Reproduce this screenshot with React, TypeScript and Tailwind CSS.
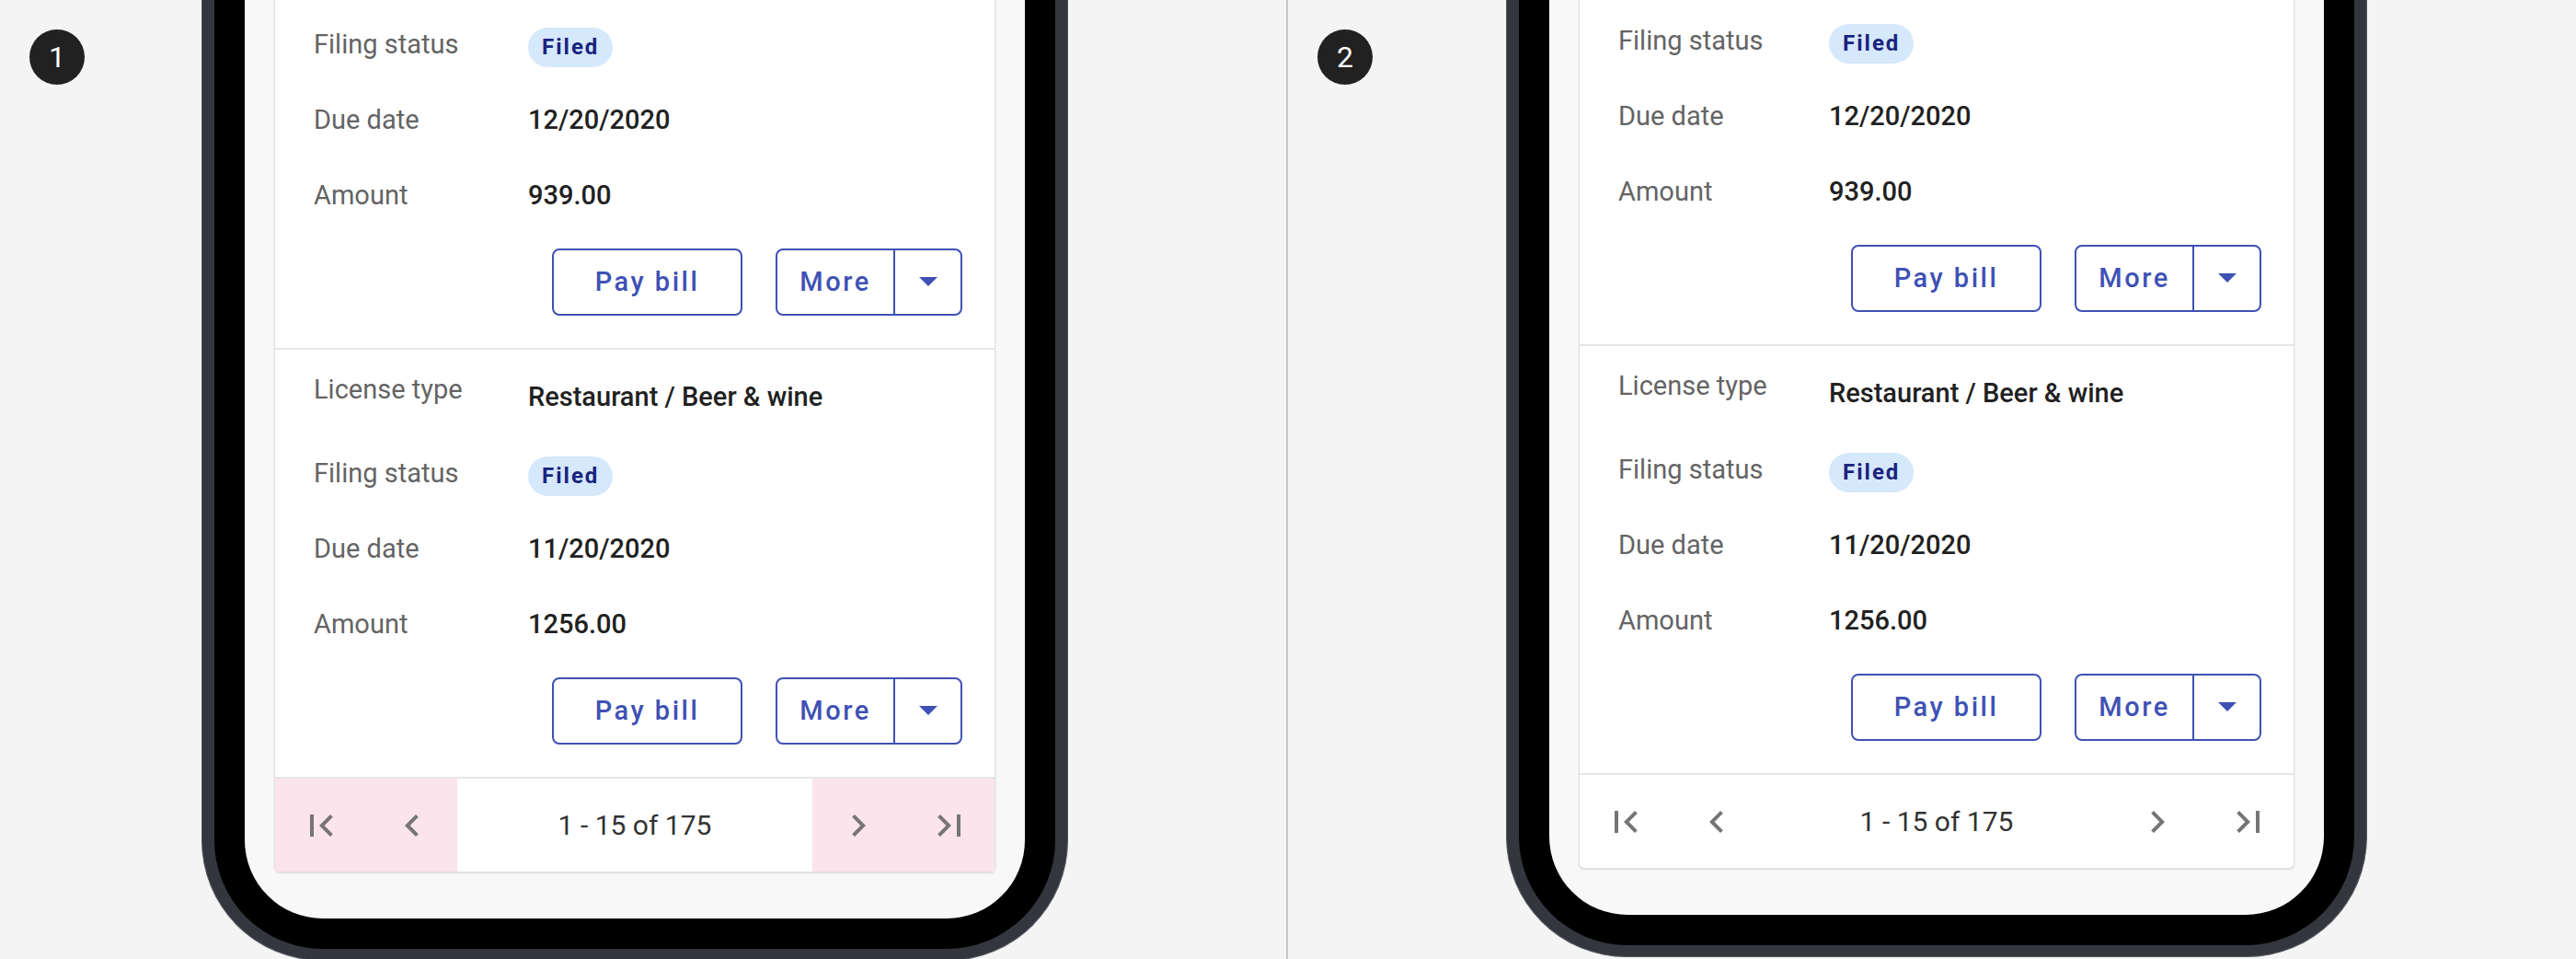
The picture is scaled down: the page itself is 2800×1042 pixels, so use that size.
import { MdFirstPage, MdChevronLeft, MdChevronRight, MdLastPage, MdArrowDropDown } from 'react-icons/md'

interface Bill {
  license: string
  status: string
  due: string
  amount: string
  hideLicense?: boolean
}

// first entry is scrolled partly off the top of the screen
const BILLS: Bill[] = [
  { license: 'Restaurant / Beer & wine', status: 'Filed', due: '12/20/2020', amount: '939.00', hideLicense: true },
  { license: 'Restaurant / Beer & wine', status: 'Filed', due: '11/20/2020', amount: '1256.00' },
]

function Label({ children }: { children: React.ReactNode }) {
  return <span className="text-[29px] leading-[34px] text-[#646464]">{children}</span>
}

function BillEntry({ bill, labelW }: { bill: Bill; labelW: string }) {
  return (
    <div className="flex flex-col border-t-2 border-[#e6e6e6] pl-[42px] pr-[35px] pb-[35px]">
      {/* License type */}
      {bill.hideLicense ? (
        <div className="h-[93px]" />
      ) : (
        <div className="flex items-start h-[93px] pt-[26px]">
          <div className={labelW}>
            <Label>License type</Label>
          </div>
          <span className="mt-[8px] text-[29px] leading-[34px] font-medium text-[#212121]">{bill.license}</span>
        </div>
      )}

      {/* Filing status */}
      <div className="flex items-center h-[82px]">
        <div className={labelW}>
          <Label>Filing status</Label>
        </div>
        <span className="mt-[6px] inline-flex items-center h-[43px] px-[15px] rounded-full bg-[#d5e8fc] text-[24px] font-bold tracking-[2px] text-[#1a237e]">
          {bill.status}
        </span>
      </div>

      {/* Due date */}
      <div className="flex items-center h-[82px]">
        <div className={labelW}>
          <Label>Due date</Label>
        </div>
        <span className="text-[29px] leading-[34px] font-medium text-[#212121]">{bill.due}</span>
      </div>

      {/* Amount */}
      <div className="flex items-center h-[82px]">
        <div className={labelW}>
          <Label>Amount</Label>
        </div>
        <span className="text-[29px] leading-[34px] font-medium text-[#212121]">{bill.amount}</span>
      </div>

      {/* Actions */}
      <div className="flex justify-end gap-[36px] mt-[17px]">
        <button className="w-[207px] h-[73px] rounded-[8px] border-2 border-[#3f51b5] text-[29px] font-medium tracking-[2.5px] text-[#3f51b5]">
          Pay bill
        </button>
        <div className="flex h-[73px] rounded-[8px] border-2 border-[#3f51b5]">
          <button className="w-[126px] text-[29px] font-medium tracking-[2.5px] text-[#3f51b5]">More</button>
          <button className="w-[73px] border-l-2 border-[#3f51b5] flex items-center justify-center text-[#3f51b5]">
            <MdArrowDropDown size={48} className="-mt-[4px]" />
          </button>
        </div>
      </div>
    </div>
  )
}

function Pagination({ highlight }: { highlight: boolean }) {
  const cell = `w-[99px] flex items-center justify-center text-[#757575] ${highlight ? 'bg-[#fce4ec]' : ''}`
  return (
    <div className="flex h-[103px] border-t-2 border-[#e6e6e6]">
      <div className={cell}>
        <MdFirstPage size={48} />
      </div>
      <div className={cell}>
        <MdChevronLeft size={48} />
      </div>
      <div className="flex-1 flex items-center justify-center text-[30px] text-[#333333]">1 - 15 of 175</div>
      <div className={cell}>
        <MdChevronRight size={48} />
      </div>
      <div className={cell}>
        <MdLastPage size={48} />
      </div>
    </div>
  )
}

function Phone({ screenW, labelW, highlight }: { screenW: string; labelW: string; highlight: boolean }) {
  return (
    <div className="shrink-0 rounded-b-[131px] bg-[#34363e] border-x border-b border-[#55575e] px-[13px] pb-[12px]">
      <div className="rounded-b-[118px] bg-black px-[33px] pb-[33px]">
        <div className={`${screenW} rounded-b-[85px] bg-[#f8f8f8] px-[32px] pb-[50px]`}>
          <div className="flex flex-col bg-white border-x border-b border-[#e0e0e0] rounded-b-[6px] shadow-[0_1px_2px_rgba(0,0,0,0.12)]">
            {BILLS.map((b, i) => (
              <BillEntry key={i} bill={b} labelW={labelW} />
            ))}
            <Pagination highlight={highlight} />
          </div>
        </div>
      </div>
    </div>
  )
}

function StepBadge({ n }: { n: number }) {
  return (
    <div className="self-start shrink-0 mt-[32px] ml-[32px] size-[60px] rounded-full bg-[#212121] flex items-center justify-center text-[32px] font-normal text-white">
      {n}
    </div>
  )
}

export default function App() {
  return (
    <div className="flex w-[2800px] h-[1042px] overflow-hidden bg-[#f4f4f4] font-['Roboto',sans-serif]">
      {/* Variant 1: touch targets highlighted */}
      <div className="w-[1398px] h-full flex items-end overflow-hidden">
        <StepBadge n={1} />
        <div className="ml-[127px] -mb-[2px] flex">
          <Phone screenW="w-[848px]" labelW="w-[233px] shrink-0" highlight />
        </div>
      </div>

      <div className="w-[2px] h-full bg-[#c6c6c6]" />

      {/* Variant 2 */}
      <div className="flex-1 h-full flex items-end overflow-hidden">
        <StepBadge n={2} />
        <div className="ml-[145px] mb-[2px] flex">
          <Phone screenW="w-[842px]" labelW="w-[229px] shrink-0" highlight={false} />
        </div>
      </div>
    </div>
  )
}
